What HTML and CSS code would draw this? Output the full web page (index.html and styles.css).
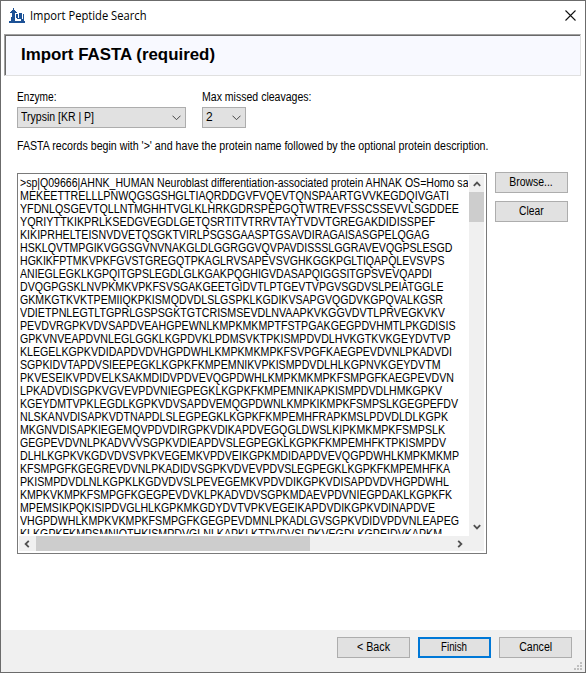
FILE: index.html
```html
<!DOCTYPE html>
<html lang="en">
<head>
<meta charset="utf-8">
<title>Import Peptide Search</title>
<link rel="stylesheet" href="styles.css">
</head>
<body>
<div class="window">
  <header class="titlebar">
    <svg class="app-icon" width="16" height="16" viewBox="0 0 16 16"><path d="M0 13h16v2H0zM2 9h1v4H2zM3 4h3v9H3zM4 0h1v2h1v1h1v1h1v1H6v1H3V5H1V4h1V3h1V2h1zM7 6h2v4h1v1H8V10H7zM10 5h2v6h-2zM12 5h1v8h-1zM14 6h1v7h-2v-2h1z" fill="#1d5296"/></svg>
    <span class="title"><span data-width="116.5">Import Peptide Search</span></span>
    <svg class="close" width="11" height="11" viewBox="0 0 11 11"><path d="M.5.5l10 10M10.500.5l-10 10" stroke="#111" stroke-width="1.1" fill="none"/></svg>
  </header>
  <div class="banner"><h1><span data-width="194">Import FASTA (required)</span></h1></div>
  <main class="content">
    <div class="fields">
      <div class="field">
        <label><span data-width="39.500">Enzyme:</span></label>
        <div class="combo combo-enzyme"><span data-width="73">Trypsin [KR | P]</span><svg width="9" height="6" viewBox="0 0 9 6"><path d="M.5.7l4 4 4-4" stroke="#444" fill="none"/></svg></div>
      </div>
      <div class="field">
        <label><span data-width="109.500">Max missed cleavages:</span></label>
        <div class="combo combo-missed"><span>2</span><svg width="9" height="6" viewBox="0 0 9 6"><path d="M.5.7l4 4 4-4" stroke="#444" fill="none"/></svg></div>
      </div>
    </div>
    <p class="hint"><span data-width="471.500">FASTA records begin with '&gt;' and have the protein name followed by the optional protein description.</span></p>
    <div class="editor">
      <div class="textbox">
        <div class="lines">
          <div><span data-width="448.500">&gt;sp|Q09666|AHNK_HUMAN Neuroblast differentiation-associated protein AHNAK OS=Homo sa</span></div>
          <div><span data-width="429">MEKEETTRELLLPNWQGSGSHGLTIAQRDDGVFVQEVTQNSPAARTGVVKEGDQIVGATI</span></div>
          <div><span data-width="439">YFDNLQSGEVTQLLNTMGHHTVGLKLHRKGDRSPEPGQTWTREVFSSCSSEVVLSGDDEE</span></div>
          <div><span data-width="415">YQRIYTTKIKPRLKSEDGVEGDLGETQSRTITVTRRVTAYTVDVTGREGAKDIDISSPEF</span></div>
          <div><span data-width="409.500">KIKIPRHELTEISNVDVETQSGKTVIRLPSGSGAASPTGSAVDIRAGAISASGPELQGAG</span></div>
          <div><span data-width="432.500">HSKLQVTMPGIKVGGSGVNVNAKGLDLGGRGGVQVPAVDISSSLGGRAVEVQGPSLESGD</span></div>
          <div><span data-width="424.500">HGKIKFPTMKVPKFGVSTGREGQTPKAGLRVSAPEVSVGHKGGKPGLTIQAPQLEVSVPS</span></div>
          <div><span data-width="412">ANIEGLEGKLKGPQITGPSLEGDLGLKGAKPQGHIGVDASAPQIGGSITGPSVEVQAPDI</span></div>
          <div><span data-width="423.500">DVQGPGSKLNVPKMKVPKFSVSGAKGEETGIDVTLPTGEVTVPGVSGDVSLPEIATGGLE</span></div>
          <div><span data-width="423">GKMKGTKVKTPEMIIQKPKISMQDVDLSLGSPKLKGDIKVSAPGVQGDVKGPQVALKGSR</span></div>
          <div><span data-width="425">VDIETPNLEGTLTGPRLGSPSGKTGTCRISMSEVDLNVAAPKVKGGVDVTLPRVEGKVKV</span></div>
          <div><span data-width="435.500">PEVDVRGPKVDVSAPDVEAHGPEWNLKMPKMKMPTFSTPGAKGEGPDVHMTLPKGDISIS</span></div>
          <div><span data-width="430.500">GPKVNVEAPDVNLEGLGGKLKGPDVKLPDMSVKTPKISMPDVDLHVKGTKVKGEYDVTVP</span></div>
          <div><span data-width="432">KLEGELKGPKVDIDAPDVDVHGPDWHLKMPKMKMPKFSVPGFKAEGPEVDVNLPKADVDI</span></div>
          <div><span data-width="420.500">SGPKIDVTAPDVSIEEPEGKLKGPKFKMPEMNIKVPKISMPDVDLHLKGPNVKGEYDVTM</span></div>
          <div><span data-width="434">PKVESEIKVPDVELKSAKMDIDVPDVEVQGPDWHLKMPKMKMPKFSMPGFKAEGPEVDVN</span></div>
          <div><span data-width="422">LPKADVDISGPKVGVEVPDVNIEGPEGKLKGPKFKMPEMNIKAPKISMPDVDLHMKGPKV</span></div>
          <div><span data-width="438">KGEYDMTVPKLEGDLKGPKVDVSAPDVEMQGPDWNLKMPKIKMPKFSMPSLKGEGPEFDV</span></div>
          <div><span data-width="428">NLSKANVDISAPKVDTNAPDLSLEGPEGKLKGPKFKMPEMHFRAPKMSLPDVDLDLKGPK</span></div>
          <div><span data-width="425">MKGNVDISAPKIEGEMQVPDVDIRGPKVDIKAPDVEGQGLDWSLKIPKMKMPKFSMPSLK</span></div>
          <div><span data-width="426">GEGPEVDVNLPKADVVVSGPKVDIEAPDVSLEGPEGKLKGPKFKMPEMHFKTPKISMPDV</span></div>
          <div><span data-width="439">DLHLKGPKVKGDVDVSVPKVEGEMKVPDVEIKGPKMDIDAPDVEVQGPDWHLKMPKMKMP</span></div>
          <div><span data-width="430">KFSMPGFKGEGREVDVNLPKADIDVSGPKVDVEVPDVSLEGPEGKLKGPKFKMPEMHFKA</span></div>
          <div><span data-width="429">PKISMPDVDLNLKGPKLKGDVDVSLPEVEGEMKVPDVDIKGPKVDISAPDVDVHGPDWHL</span></div>
          <div><span data-width="432">KMPKVKMPKFSMPGFKGEGPEVDVKLPKADVDVSGPKMDAEVPDVNIEGPDAKLKGPKFK</span></div>
          <div><span data-width="415">MPEMSIKPQKISIPDVGLHLKGPKMKGDYDVTVPKVEGEIKAPDVDIKGPKVDINAPDVE</span></div>
          <div><span data-width="439">VHGPDWHLKMPKVKMPKFSMPGFKGEGPEVDMNLPKADLGVSGPKVDIDVPDVNLEAPEG</span></div>
          <div><span data-width="422">KLKGPKFKMPSMNIQTHKISMPDVGLNLKAPKLKTDVDVSLPKVEGDLKGPEIDVKAPKM</span></div>
        </div>
        <div class="vscroll">
          <svg width="8" height="6" viewBox="0 0 8 6"><path d="M.8 4.800L4 1.600l3.200 3.200" stroke="#505050" stroke-width="1.800" fill="none"/></svg>
          <i class="vthumb"></i>
          <svg class="end" width="8" height="6" viewBox="0 0 8 6"><path d="M.8 1.200L4 4.400l3.200-3.200" stroke="#505050" stroke-width="1.800" fill="none"/></svg>
        </div>
        <div class="hscroll">
          <svg width="6" height="8" viewBox="0 0 6 8"><path d="M4.800.8L1.600 4l3.200 3.200" stroke="#505050" stroke-width="1.800" fill="none"/></svg>
          <i class="hthumb"></i>
          <svg class="end" width="6" height="8" viewBox="0 0 6 8"><path d="M1.200.8L4.400 4 1.200 7.200" stroke="#505050" stroke-width="1.800" fill="none"/></svg>
        </div>
      </div>
      <div class="side">
        <button><span data-width="43.500">Browse...</span></button>
        <button><span data-width="24.500">Clear</span></button>
      </div>
    </div>
  </main>
  <footer class="footer">
    <button><span data-width="33">&lt; Back</span></button>
    <button class="default"><span data-width="26">Finish</span></button>
    <button><span data-width="33">Cancel</span></button>
    <svg class="grip" width="8" height="8" viewBox="0 0 8 8"><path d="M6 0h2v2H6zM3 3h2v2H3zM6 3h2v2H6zM0 6h2v2H0zM3 6h2v2H3zM6 6h2v2H6z" fill="#bfbfbf"/></svg>
  </footer>
</div>
<script src="fit.js"></script>
</body>
</html>
```

FILE: styles.css
```css
* { box-sizing: border-box; }
body {
  margin: 0;
  font: 12px/13px "Liberation Sans", Arial, sans-serif;
  color: #000;
  background: #fff;
}
svg { display: block; flex: none; }
span { white-space: pre; }
[data-width] { display: inline-block; transform-origin: 0 50%; }
.window {
  width: 586px;
  height: 673px;
  border: 1px solid #6b6b6b;
  display: flex;
  flex-direction: column;
  overflow: hidden;
}
.titlebar {
  height: 33px;
  display: flex;
  align-items: flex-start;
  padding: 7px 9px 0 8px;
}
.title {
  flex: 1;
  margin-left: 5px;
  font: 12px/16px "Open Sans", "Noto Sans", sans-serif;
}
.close { margin-top: 2px; }
.banner {
  height: 42px;
  margin: 0 4px 0 3px;
  border: 1px solid;
  border-color: #a0a0a0 #e0e0e0 #e0e0e0 #a0a0a0;
  box-shadow: inset 1px 1px #696969;
  background: #f8f9ff;
}
h1 {
  margin: 0;
  padding: 7px 0 0 16px;
  font-size: 16.5px;
  line-height: 24px;
  font-weight: bold;
}
.content { flex: 1; padding: 15px 17px 0 16px; }
.fields { display: flex; gap: 16px; }
.field { width: 169px; }
label { display: block; height: 16px; }
.combo {
  height: 21px;
  border: 1px solid #adadad;
  background: #e1e1e1;
  display: flex;
  align-items: center;
  justify-content: space-between;
  padding: 0 4px 0 3px;
}
.combo-missed { width: 44px; }
.hint { margin: 12px 0 20px; height: 13px; }
.editor { display: flex; gap: 8px; }
.textbox {
  width: 470px;
  height: 381px;
  border: 1px solid #7a7a7a;
  padding: 1px;
  display: grid;
  grid-template: 361px 16px / 450px 16px;
}
.lines { overflow: hidden; height: 359px; width: 449px; padding: 2px 0 0 1px; }
.lines div { height: 13px; line-height: 13px; }
.vscroll {
  background: #f0f0f0;
  display: flex;
  flex-direction: column;
  align-items: center;
  padding: 6px 0;
  width: 15px;
}
.vthumb { width: 15px; height: 30px; margin-top: 5px; background: #cdcdcd; }
.hscroll {
  grid-column: 1 / 3;
  width: 465px;
  height: 15px;
  background: #f0f0f0;
  display: flex;
  align-items: center;
  padding: 0 21px 0 5px;
}
.hthumb { width: 274px; height: 15px; margin-left: 6px; background: #cdcdcd; }
.vscroll .end { margin-top: auto; }
.hscroll .end { margin-left: auto; }
.side { display: flex; flex-direction: column; gap: 8px; margin-top: -1px; }
button {
  width: 73px;
  height: 21px;
  padding: 0;
  border: 1px solid #adadad;
  background: #e1e1e1;
  color: #000;
  font: inherit;
}
button [data-width] { transform-origin: 50% 50%; }
.footer {
  height: 42px;
  background: #f0f0f0;
  display: flex;
  gap: 8px;
  padding: 7px 2px 0 336px;
}
.default { border: 2px solid #0078d7; }
.grip { margin: 25px 0 0 -6px; }
```

FILE: fit.js
```js
// Condenses or widens each label so that its text spans the width given in data-width.
document.querySelectorAll('[data-width]').forEach(function (el) {
  var natural = el.getBoundingClientRect().width;
  var target = parseFloat(el.dataset.width);
  el.style.transform = 'scaleX(' + target / natural + ')';
});
```
